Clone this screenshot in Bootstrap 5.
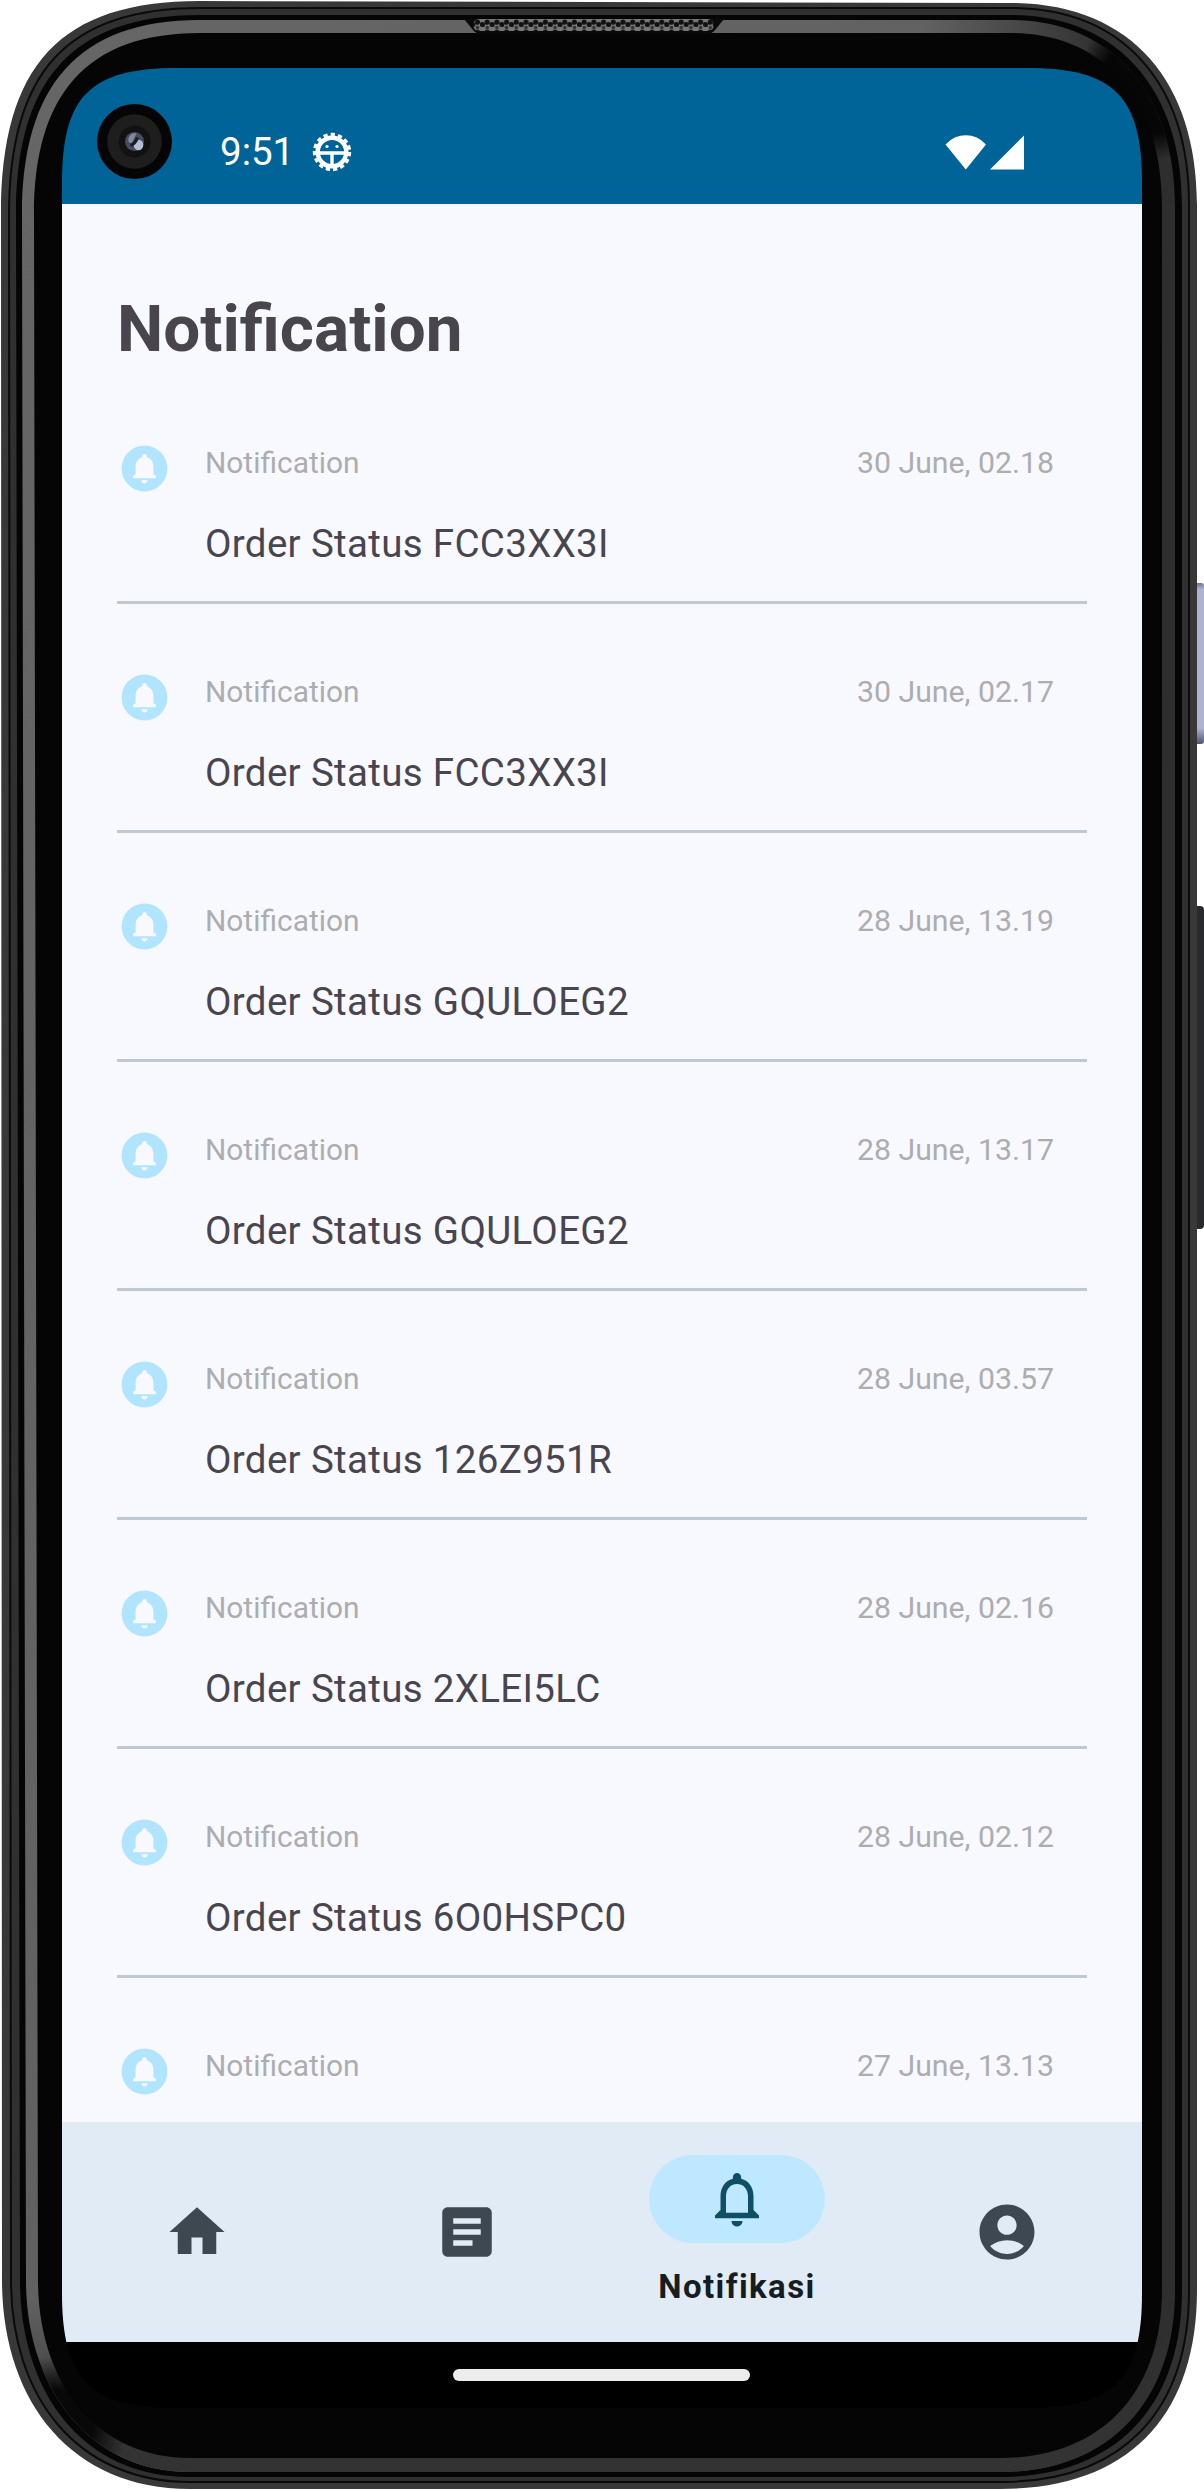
<!DOCTYPE html>
<html lang="en">
<head>
<meta charset="utf-8">
<meta name="viewport" content="width=device-width, initial-scale=1">
<title>Notification</title>
<link href="https://cdn.jsdelivr.net/npm/bootstrap@5.3.0/dist/css/bootstrap.min.css" rel="stylesheet">
<style>
  body { background: #fff; font-family: Roboto, "Liberation Sans", sans-serif; }
  .phone { width: 1204px; height: 2491px; padding: 68px 62px 83px; }
  .bezel { position: absolute; left: 0; top: 0; z-index: 0; }
  .camera { left: 97px; top: 104px; z-index: 2; }
  .screen { z-index: 1; height: 2340px; background: #000;
    clip-path: path("M0 115C0 28 28 0 115 0H965C1052 0 1080 28 1080 115V2225C1080 2312 1052 2340 965 2340H115C28 2340 0 2312 0 2225Z"); }
  .status-bar { height: 136px; background: #006499; color: #fff; padding: 32px 117px 0 158px; }
  .clock { font-size: 38.5px; line-height: 46px; }
  .gear { margin-left: 18px; }
  .feed { height: 1918px; background: #f8f9ff; padding: 0 55px; }
  .feed h1 { font-size: 65.6px; line-height: 78px; color: #49454f; margin: 86px 0 0 0; }
  .feed-list { margin-top: 7px; }
  .entry { height: 229px; border-bottom: 3px solid #bfc8d3; padding: 70px 33px 0 0; }
  .entry-icon { width: 55px; height: 55px; margin-top: -4px; }
  .entry-body { margin-left: 33px; }
  .meta { font-size: 30.25px; line-height: 36px; color: #adadaf; }
  .meta span { font-size: 29.9px; }
  .order { font-size: 38.5px; line-height: 46px; letter-spacing: .33px; color: #49454f; margin-top: 40px; }
  .tabs { height: 220px; background: #e1ebf5; color: #3f4851; }
  .tab-label { font-size: 33px; line-height: 44px; letter-spacing: 1.4px; color: #171c20; margin-top: 22px; }
  .pill { width: 176px; height: 88px; background: #bee8ff; color: #0f4f66; margin-top: 33px; }
  .gesture { height: 66px; padding: 27px 2px 0 0; }
  .gesture-bar { width: 297px; height: 12px; background: #ececec; }
</style>
<script src="https://cdn.jsdelivr.net/npm/bootstrap@5.3.0/dist/js/bootstrap.bundle.min.js"></script>
</head>
<body>
<svg width="0" height="0" class="position-absolute" aria-hidden="true">
  <symbol id="bell-badge" viewBox="0 0 24 24">
    <circle cx="12" cy="12" r="10" fill="#b1e4ff"/>
    <path fill="#f8f9ff" d="M12 5.7c-.55 0-1 .42-1 .95v.4C9.1 7.6 8.1 9.3 8.1 11.3v3.2L7 15.2v1.1h10v-1.1l-1.1-.7v-3.2c0-2-1-3.7-2.9-4.25v-.4c0-.53-.45-.95-1-.95zM10.6 17.1c0 .8.6 1.4 1.4 1.4s1.4-.6 1.4-1.4z"/>
  </symbol>
</svg>
<main class="phone position-relative overflow-hidden">
  <svg class="bezel" width="1204" height="2491" viewBox="0 0 1204 2491" aria-hidden="true">
    <defs>
      <linearGradient id="rim" x1="0" y1="0" x2="1" y2="0">
        <stop offset="0" stop-color="#666"/><stop offset=".78" stop-color="#626262"/><stop offset=".95" stop-color="#2c2c2c"/><stop offset="1" stop-color="#2e2e2e"/>
      </linearGradient>
      <linearGradient id="fade" x1="0" y1="0" x2="0" y2="1">
        <stop offset="0" stop-color="#333" stop-opacity="0"/><stop offset=".93" stop-color="#333" stop-opacity=".1"/><stop offset=".99" stop-color="#333"/>
      </linearGradient>
      <linearGradient id="power" x1="0" y1="0" x2="0" y2="1">
        <stop offset="0" stop-color="#70748c"/><stop offset=".04" stop-color="#b0b3d0"/><stop offset=".9" stop-color="#b0b3d0"/><stop offset="1" stop-color="#50546c"/>
      </linearGradient>
      <radialGradient id="shade-tr" gradientUnits="userSpaceOnUse" cx="1150" cy="85" r="75">
        <stop offset="0" stop-color="#060606"/><stop offset=".65" stop-color="#060606"/><stop offset="1" stop-color="#060606" stop-opacity="0"/>
      </radialGradient>
      <radialGradient id="shade-bl" gradientUnits="userSpaceOnUse" cx="58" cy="2425" r="70">
        <stop offset="0" stop-color="#080808"/><stop offset=".5" stop-color="#080808"/><stop offset="1" stop-color="#080808" stop-opacity="0"/>
      </radialGradient>
      <pattern id="mesh" x="480" y="19" width="9.7" height="10" patternUnits="userSpaceOnUse">
        <rect width="9.7" height="10" fill="#777"/>
        <circle cx="2.4" cy="5.5" r="2.6" fill="#111"/><circle cx="7.2" cy="3.2" r="2.6" fill="#111"/><circle cx="7.2" cy="8.6" r="1.8" fill="#333"/>
      </pattern>
    </defs>
    <rect x="1192" y="583" width="12" height="161" rx="3" fill="url(#power)"/>
    <rect x="1192" y="906" width="12" height="323" rx="4" fill="#292a2e"/>
    <path fill="#383838" d="M1 215C1 65 60 1 200 1L1010 3C1130 3 1197 80 1197 205V2290C1197 2415 1130 2489 1000 2489H190C70 2489 2 2400 2 2280Z"/>
    <path fill="#303030" stroke="#0a0a0a" stroke-width="2" d="M9 215C9 73 66 8 200 8H1010C1124 8 1189 84 1189 205V2290C1189 2410 1124 2482 1000 2482H190C76 2482 11 2396 11 2280Z"/>
    <path fill="#050505" d="M16 215C16 80 72 15 200 15H1010C1118 15 1182 90 1182 205V2290C1182 2404 1118 2477 1000 2477H190C82 2477 20 2392 20 2280Z"/>
    <g id="rim-layers">
      <path id="rim-shape" fill="url(#rim)" d="M22 215C22 86 78 20 200 20H1010C1112 20 1175 94 1175 205V2290C1175 2398 1112 2472 1000 2472H190C88 2472 26 2386 26 2280Z"/>
      <path fill="url(#fade)" d="M22 215C22 86 78 20 200 20H1010C1112 20 1175 94 1175 205V2290C1175 2398 1112 2472 1000 2472H190C88 2472 26 2386 26 2280Z"/>
      <path fill="url(#shade-tr)" d="M22 215C22 86 78 20 200 20H1010C1112 20 1175 94 1175 205V2290C1175 2398 1112 2472 1000 2472H190C88 2472 26 2386 26 2280Z"/>
      <path fill="url(#shade-bl)" d="M22 215C22 86 78 20 200 20H1010C1112 20 1175 94 1175 205V2290C1175 2398 1112 2472 1000 2472H190C88 2472 26 2386 26 2280Z"/>
    </g>
    <path fill="#050505" d="M34 215C34 95 86 33 200 33H1010C1104 33 1162 100 1162 205V2290C1162 2390 1104 2458 1000 2458H190C96 2458 38 2382 38 2280Z"/>
    <path fill="#0a0a0a" d="M464 19h260l-9 11q-3 4-9 4H482q-6 0-9-4z"/>
    <rect x="473" y="19" width="241" height="12" rx="6" fill="url(#mesh)"/>
  </svg>

  <div class="screen position-relative d-flex flex-column">
    <header class="status-bar d-flex align-items-center">
      <span class="clock">9:51</span>
      <svg class="gear" width="40" height="40" viewBox="-20 -20 40 40" fill="none" stroke="#fff">
        <circle r="14.3" stroke-width="4.4"/>
        <circle r="17" stroke-width="4.4" stroke-dasharray="4.1 3.02"/>
        <path stroke-width="3.4" d="M-14 1H14M0 1V15"/>
        <g fill="#fff" stroke="none"><circle cx="-5" cy="-5.5" r="1.6"/><circle cx="5" cy="-5.5" r="1.6"/></g>
      </svg>
      <svg class="ms-auto" width="80" height="36" viewBox="0 0 80 36" fill="#fff">
        <path d="M.5 10.5Q9 1.3 20.8 1.3T41 10.5L20.8 35.5zM45 35.5L79 1.5V35.5z"/>
      </svg>
    </header>

    <section class="feed overflow-hidden">
      <h1 class="fw-bold">Notification</h1>
      <div class="feed-list" id="feed"></div>
    </section>

    <nav class="tabs d-flex">
      <a class="col-3 d-flex justify-content-center align-items-center text-reset" href="#" aria-label="Home">
        <svg width="66" height="66" viewBox="0 0 24 24" fill="currentColor"><path d="M10 20v-6h4v6h5v-8h3L12 3 2 12h3v8z"/></svg>
      </a>
      <a class="col-3 d-flex justify-content-center align-items-center text-reset" href="#" aria-label="Orders">
        <svg width="66" height="66" viewBox="0 0 24 24" fill="currentColor"><path d="M19 3H5c-1.1 0-2 .9-2 2v14c0 1.1.9 2 2 2h14c1.1 0 2-.9 2-2V5c0-1.1-.9-2-2-2zm-5 14H7v-2h7v2zm3-4H7v-2h10v2zm0-4H7V7h10v2z"/></svg>
      </a>
      <a class="col-3 d-flex flex-column align-items-center text-reset text-decoration-none" href="#">
        <span class="pill rounded-pill d-flex justify-content-center align-items-center">
          <svg width="66" height="66" viewBox="0 0 24 24" fill="currentColor"><path d="M12 22c1.1 0 2-.9 2-2h-4c0 1.1.9 2 2 2zm6-6v-5c0-3.07-1.63-5.64-4.5-6.32V4c0-.83-.67-1.5-1.5-1.5s-1.5.67-1.5 1.5v.68C7.64 5.36 6 7.92 6 11v5l-2 2v1h16v-1l-2-2zm-2 1H8v-6c0-2.48 1.51-4.5 4-4.5s4 2.02 4 4.5v6z"/></svg>
        </span>
        <span class="tab-label fw-bold">Notifikasi</span>
      </a>
      <a class="col-3 d-flex justify-content-center align-items-center text-reset" href="#" aria-label="Account">
        <svg width="66" height="66" viewBox="0 0 24 24" fill="currentColor"><path d="M12 2C6.48 2 2 6.48 2 12s4.48 10 10 10 10-4.48 10-10S17.52 2 12 2zm0 4c1.93 0 3.5 1.57 3.5 3.5S13.93 13 12 13s-3.5-1.57-3.5-3.5S10.07 6 12 6zm0 14c-2.03 0-4.43-.82-6.14-2.88C7.55 15.8 9.68 15 12 15s4.45.8 6.14 2.12C16.43 19.18 14.03 20 12 20z"/></svg>
      </a>
    </nav>
    <div class="gesture d-flex justify-content-center"><div class="gesture-bar rounded-pill"></div></div>
  </div>

  <svg class="position-absolute camera" width="75" height="75" viewBox="-37.5 -37.5 75 75" aria-hidden="true">
    <circle r="37.5" fill="#050505"/><circle r="27.3" fill="#1e1e1e"/><circle r="16" fill="#121214"/><circle r="9.5" fill="#4a4c60"/>
    <path d="M-6-3Q-4-9 2-8L-3 2Q-7 1-6-3z" fill="#8488a0"/><ellipse cx="4" cy="3.5" rx="4.8" ry="5.2" fill="#b4bfd6"/><path d="M-4 4Q1 2 3-4" stroke="#1c1c26" stroke-width="3.2" fill="none"/>
  </svg>
</main>
<script>
  const entries = [
    ["30 June, 02.18", "FCC3XX3I"], ["30 June, 02.17", "FCC3XX3I"],
    ["28 June, 13.19", "GQULOEG2"], ["28 June, 13.17", "GQULOEG2"],
    ["28 June, 03.57", "126Z951R"], ["28 June, 02.16", "2XLEI5LC"],
    ["28 June, 02.12", "6O0HSPC0"], ["27 June, 13.13", ""]
  ];
  document.getElementById("feed").innerHTML = entries.map(([date, code]) => `
    <article class="entry d-flex">
      <svg class="entry-icon flex-shrink-0"><use href="#bell-badge"/></svg>
      <div class="entry-body flex-grow-1">
        <div class="meta d-flex justify-content-between"><span>Notification</span><time>${date}</time></div>
        ${code ? `<div class="order">Order Status ${code}</div>` : ""}
      </div>
    </article>`).join("");
</script>
</body>
</html>
